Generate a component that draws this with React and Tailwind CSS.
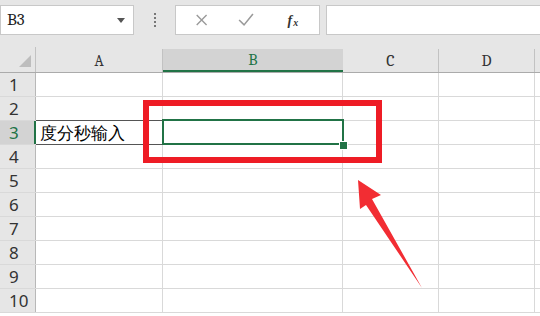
import React from 'react';

const cols = [
    { key: 'A', w: 'w-[127px]' },
    { key: 'B', w: 'w-[180px]' },
    { key: 'C', w: 'w-[96px]' },
    { key: 'D', w: 'w-[96px]' },
];

const rows = [1, 2, 3, 4, 5, 6, 7, 8, 9, 10];

function TopBar() {
    return (
        <div className="flex items-start h-[47px] bg-[#e6e6e6] pt-[5px]">
            <div className="flex items-center justify-between w-[134px] h-[30px] bg-white border border-[#c8c8c8] pl-[6px] pr-[8px]">
                <span className="text-[17px] text-[#222] font-serif">B3</span>
                <span className="w-0 h-0 border-l-[4px] border-r-[4px] border-t-[5px] border-l-transparent border-r-transparent border-t-[#555]" />
            </div>
            <div className="flex flex-col items-center justify-center gap-[2px] w-[41px] h-[30px]">
                <span className="w-[2px] h-[2px] bg-[#777]" />
                <span className="w-[2px] h-[2px] bg-[#777]" />
                <span className="w-[2px] h-[2px] bg-[#777]" />
                <span className="w-[2px] h-[2px] bg-[#777]" />
            </div>
            <div className="flex items-center w-[145px] h-[30px] bg-white border border-[#c8c8c8]">
                <svg width="145" height="30" viewBox="0 0 145 30">
                    <path d="M21 10 L31 20 M31 10 L21 20" stroke="#9a9a9a" strokeWidth="1.4" fill="none" />
                    <path d="M64 15 L69 20 L78 9" stroke="#9a9a9a" strokeWidth="1.6" fill="none" />
                    <text x="113" y="20" fontSize="14" fontStyle="italic" fontWeight="bold" fill="#333" fontFamily="Liberation Serif, serif">f</text>
                    <text x="119" y="21" fontSize="10" fontStyle="italic" fontWeight="bold" fill="#333" fontFamily="Liberation Serif, serif">x</text>
                </svg>
            </div>
            <div className="ml-[6px] flex-1 h-[30px] bg-white border border-[#c8c8c8] border-r-0" />
        </div>
    );
}

function HeaderRow() {
    return (
        <div className="flex h-[26px] bg-[#e6e6e6] border-b border-[#ababab] font-serif">
            <div className="relative w-[36px] shrink-0 border-r border-[#c2c2c2]">
                <svg className="absolute right-[4px] bottom-[5px]" width="12" height="12" viewBox="0 0 12 12">
                    <path d="M12 0 L12 12 L0 12 Z" fill="#bdbdbd" />
                </svg>
            </div>
            {cols.map((c) => (
                <div
                    key={c.key}
                    className={
                        c.key === 'B'
                            ? `${c.w} shrink-0 mt-[2px] flex items-center justify-center bg-[#d3d3d3] border-b-2 border-[#217346] text-[#217346] text-[16px]`
                            : `${c.w} shrink-0 mt-[2px] flex items-center justify-center border-r border-[#c2c2c2] text-[#333] text-[16px]`
                    }
                >
                    {c.key}
                </div>
            ))}
            <div className="flex-1" />
        </div>
    );
}

function Row({ n }) {
    const active = n === 3;
    return (
        <div className="flex h-[24px] border-b border-[#d9d9d9]">
            <div
                className={
                    active
                        ? "w-[36px] shrink-0 flex items-center pl-[9px] bg-[#d3d3d3] border-r-2 border-[#217346] text-[#217346] text-[17px] font-sans"
                        : "w-[36px] shrink-0 flex items-center pl-[9px] bg-[#e6e6e6] border-r border-[#b8b8b8] text-[#333] text-[17px] font-sans"
                }
            >
                {n}
            </div>
            {cols.map((c) => {
                if (active && c.key === 'A') {
                    return (
                        <div
                            key={c.key}
                            className={`${c.w} shrink-0 -mt-px h-[25px] flex items-center pl-[4px] border-y border-[#555] text-[17px] text-black font-sans`}
                        >
                            度分秒输入
                        </div>
                    );
                }
                if (active && c.key === 'B') {
                    return (
                        <div key={c.key} className={`${c.w} shrink-0 relative z-10 border-r border-[#d9d9d9]`}>
                            <div className="absolute -left-[1px] -top-[2px] -right-[2px] -bottom-[1px] border-2 border-[#217346]" />
                            <div className="absolute -right-[6px] -bottom-[6px] w-[9px] h-[9px] bg-[#217346] border border-white" />
                        </div>
                    );
                }
                return <div key={c.key} className={`${c.w} shrink-0 border-r border-[#d9d9d9]`} />;
            })}
            <div className="flex-1" />
        </div>
    );
}

export default function App() {
    return (
        <div className="relative w-[540px] h-[316px] overflow-hidden bg-white">
            <TopBar />
            <HeaderRow />
            {rows.map((n) => (
                <Row key={n} n={n} />
            ))}

            {/* annotation overlay */}
            <div className="absolute z-20 left-[143px] top-[100px] w-[239px] h-[63px] border-[6px] border-[#ee1c25]" />
            <svg className="absolute z-20 left-0 top-0" width="540" height="316" viewBox="0 0 540 316">
                <path d="M358 180 L381 195 L372 199 L422 288 L366 205 L360 209 Z" fill="#f22d33" />
            </svg>
        </div>
    );
}
